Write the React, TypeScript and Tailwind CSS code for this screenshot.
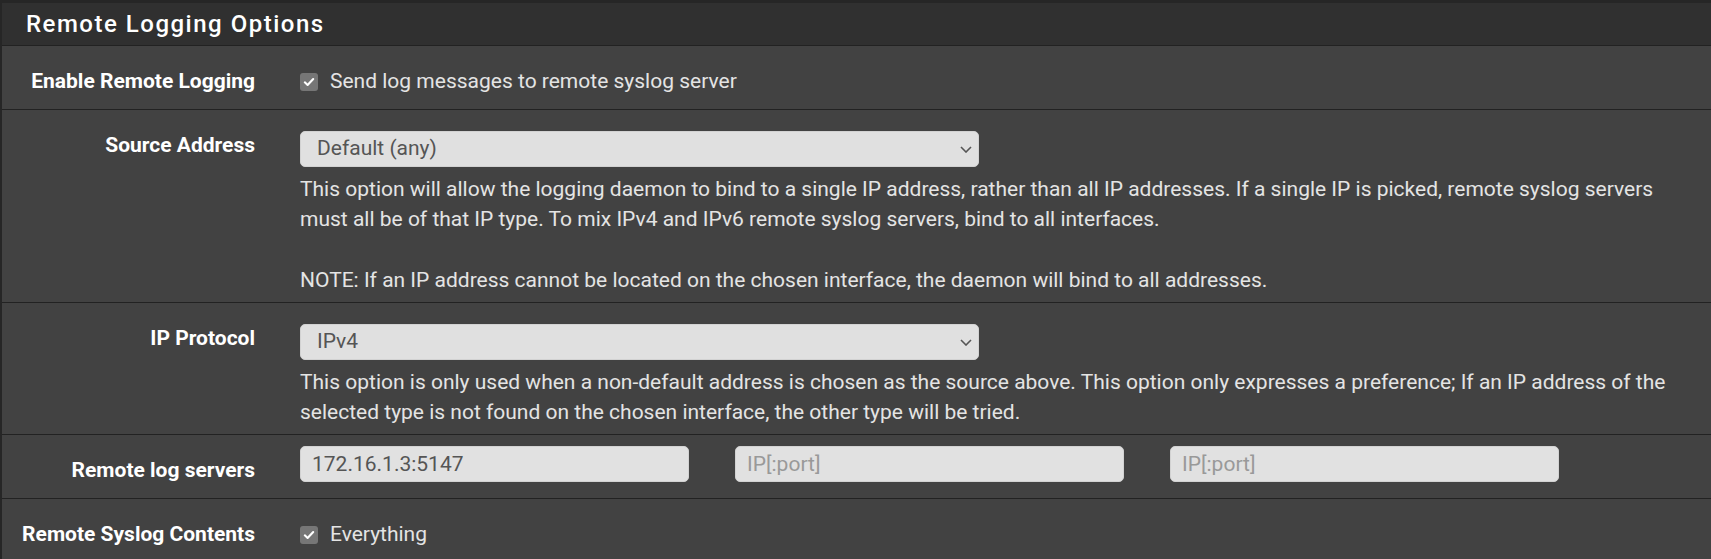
import { ReactNode } from 'react';

function CheckBox() {
  return (
    <span className="inline-flex h-[18px] w-[18px] shrink-0 items-center justify-center rounded-[3px] bg-[#767676] translate-y-[1px]">
      <svg viewBox="0 0 16 16" className="h-[14px] w-[14px]">
        <path d="M3.2 8.4 6.4 11.4 12.8 4.6" fill="none" stroke="#fff" strokeWidth="2.4" strokeLinecap="round" strokeLinejoin="round" />
      </svg>
    </span>
  );
}

function Select({ value }: { value: string }) {
  return (
    <div className="relative mt-[10px] w-[679px]">
      <select
        value={value}
        onChange={() => {}}
        className="h-[36px] w-full appearance-none rounded-[5px] border border-[#d2d2d2] bg-[#e0e0e0] pl-[16px] text-[21px] text-[#555] outline-none"
      >
        <option>{value}</option>
      </select>
      <svg viewBox="0 0 12 7" className="pointer-events-none absolute right-[7px] top-[15px] h-[7px] w-[12px]">
        <path d="M1 1l5 5 5-5" fill="none" stroke="#555" strokeWidth="1.6" />
      </svg>
    </div>
  );
}

function Row({ label, children, className = '' }: { label: string; children: ReactNode; className?: string }) {
  return (
    <div className={`flex min-h-[64px] border-b border-[#222] pt-[11px] pb-[7px] ${className}`}>
      <div className="w-[275px] shrink-0 pr-[22px] pt-[9px] text-right text-[21px] font-bold leading-[30px] text-white">
        {label}
      </div>
      <div className="flex-1 px-[23px]">{children}</div>
    </div>
  );
}

function CheckLine({ text }: { text: string }) {
  return (
    <label className="flex items-center gap-[12px] pt-[9px] text-[21px] leading-[30px] text-[#e4e4e4]">
      <CheckBox />
      {text}
    </label>
  );
}

function Help({ children }: { children: ReactNode }) {
  return <div className="mt-[7px] text-[21px] leading-[30.2px] text-[#e4e4e4]">{children}</div>;
}

const inputCls =
  'h-[36px] w-[389px] rounded-[5px] border border-[#d2d2d2] bg-[#e1e1e1] px-[11px] text-[21px] text-[#555] placeholder:text-[#999] outline-none';

export default function App() {
  return (
    <div className="h-[559px] overflow-hidden bg-[#424242] font-['Roboto','Liberation_Sans',sans-serif]">
      <div className="border-t-[3px] border-l-[2px] border-[#262626]">
        <div className="flex h-[43px] items-center border-b border-[#222] bg-[#303030] pl-[24px]">
          <h2 className="text-[24px] font-medium leading-none tracking-[1.5px] text-white">Remote Logging Options</h2>
        </div>

        <Row label="Enable Remote Logging">
          <CheckLine text="Send log messages to remote syslog server" />
        </Row>

        <Row label="Source Address">
          <Select value="Default (any)" />
          <Help>
            This option will allow the logging daemon to bind to a single IP address, rather than all IP addresses. If a
            single IP is picked, remote syslog servers must all be of that IP type. To mix IPv4 and IPv6 remote syslog
            servers, bind to all interfaces.
            <br />
            <br />
            NOTE: If an IP address cannot be located on the chosen interface, the daemon will bind to all addresses.
          </Help>
        </Row>

        <Row label="IP Protocol">
          <Select value="IPv4" />
          <Help>
            This option is only used when a non-default address is chosen as the source above. This option only expresses
            a preference; If an IP address of the selected type is not found on the chosen interface, the other type will
            be tried.
          </Help>
        </Row>

        <div className="flex min-h-[64px] border-b border-[#222] pt-[11px] pb-[7px]">
          <div className="w-[275px] shrink-0 pr-[22px] pt-[9px] text-right text-[21px] font-bold leading-[30px] text-white">
            Remote log servers
          </div>
          <div className="flex flex-1 gap-[46px] px-[23px]">
            <input className={inputCls} defaultValue="172.16.1.3:5147" readOnly />
            <input className={inputCls} placeholder="IP[:port]" readOnly />
            <input className={inputCls} placeholder="IP[:port]" readOnly />
          </div>
        </div>

        <Row label="Remote Syslog Contents" className="border-b-0">
          <CheckLine text="Everything" />
        </Row>
      </div>
    </div>
  );
}
